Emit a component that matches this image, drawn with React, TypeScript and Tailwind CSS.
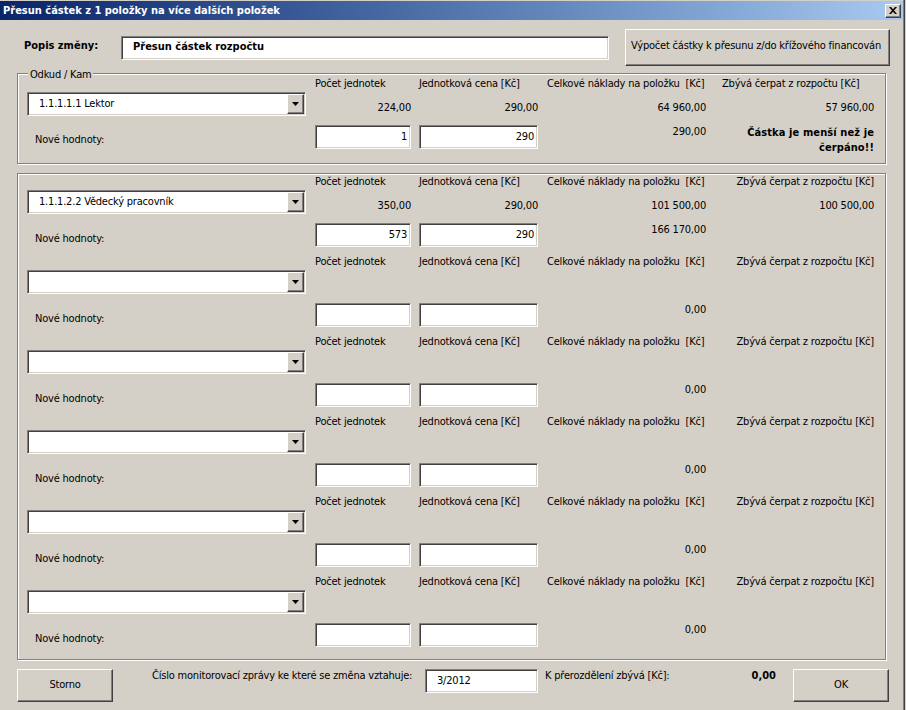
import React from 'react';

// classic Windows look
const FONT = "font-['DejaVu_Sans_Condensed','DejaVu_Sans',sans-serif] text-[11px] text-black tracking-[-0.2px]";
const SUNKEN =
  'bg-white border border-t-[#808080] border-l-[#808080] border-r-white border-b-white shadow-[inset_1px_1px_0_#404040,inset_-1px_-1px_0_#d4d0c8]';
const RAISED =
  'bg-[#d4d0c8] border border-t-white border-l-white border-r-[#404040] border-b-[#404040] shadow-[inset_-1px_-1px_0_#808080]';

type Row = {
  item?: string;
  count?: string;
  price?: string;
  total?: string;
  remaining?: string;
  newCount?: string;
  newPrice?: string;
  newTotal?: string;
  warning?: boolean;
};

function Combo({ value }: { value?: string }) {
  return (
    <div className={`${SUNKEN} w-[279px] h-[24px] flex items-center`}>
      <span className="flex-1 pl-[11px] whitespace-nowrap overflow-hidden leading-[14px]">{value}</span>
      <div className={`${RAISED} w-[17px] h-[20px] mr-[1px] flex items-center justify-center`}>
        <svg width="7" height="4" viewBox="0 0 7 4">
          <path d="M0 0h7L3.5 4z" fill="#000" />
        </svg>
      </div>
    </div>
  );
}

function Box({ value, className = '' }: { value?: string; className?: string }) {
  return (
    <div className={`${SUNKEN} h-[24px] flex items-center justify-end pr-[3px] leading-[14px] ${className}`}>
      {value}
    </div>
  );
}

function Group({ row, rightLabel, noveTop }: { row: Row; rightLabel?: boolean; noveTop: string }) {
  return (
    <div className="flex h-[72px] shrink-0">
      <div className="w-[288px] shrink-0 pt-[15px]">
        <Combo value={row.item} />
        <div className={`${noveTop} pl-[8px] leading-[14px]`}>Nové hodnoty:</div>
      </div>

      <div className="w-[104px] shrink-0">
        <div className="leading-[14px] whitespace-nowrap">Počet jednotek</div>
        <div className="mt-[10px] w-[96px] h-[14px] text-right leading-[14px]">{row.count}</div>
        <Box value={row.newCount} className="mt-[10px] w-[96px]" />
      </div>

      <div className="w-[128px] shrink-0">
        <div className="leading-[14px] whitespace-nowrap">Jednotková cena [Kč]</div>
        <div className="mt-[10px] w-[119px] h-[14px] text-right leading-[14px]">{row.price}</div>
        <Box value={row.newPrice} className="mt-[10px] w-[119px]" />
      </div>

      <div className="w-[175px] shrink-0">
        <div className="leading-[14px] whitespace-nowrap">Celkové náklady na položku&nbsp; [Kč]</div>
        <div className="mt-[10px] w-[159px] h-[14px] text-right leading-[14px]">{row.total}</div>
        <div className="mt-[10px] w-[159px] h-[14px] text-right leading-[14px]">{row.newTotal}</div>
      </div>

      <div className="w-[152px] shrink-0">
        <div className={`leading-[14px] whitespace-nowrap ${rightLabel ? 'text-right' : ''}`}>
          Zbývá čerpat z rozpočtu [Kč]
        </div>
        <div className="mt-[10px] h-[14px] text-right leading-[14px]">{row.remaining}</div>
        {row.warning && (
          <div className="mt-[10px] text-right font-bold tracking-[0.1px] leading-[15px] whitespace-nowrap">
            Částka je menší než je
            <br />
            čerpáno!!
          </div>
        )}
      </div>
    </div>
  );
}

function Frame({ children, legend, className }: { children: React.ReactNode; legend?: string; className: string }) {
  return (
    <div
      className={`relative ml-[17px] w-[869px] border border-[#808080] shadow-[inset_1px_1px_0_#fff,1px_1px_0_#fff] pl-[9px] ${className}`}
    >
      {legend && (
        <span className="absolute -top-[6px] left-[10px] px-[2px] bg-[#d4d0c8] leading-[14px]">{legend}</span>
      )}
      {children}
    </div>
  );
}

const source: Row = {
  item: '1.1.1.1.1 Lektor',
  count: '224,00',
  price: '290,00',
  total: '64 960,00',
  remaining: '57 960,00',
  newCount: '1',
  newPrice: '290',
  newTotal: '290,00',
  warning: true,
};

const targets: Row[] = [
  {
    item: '1.1.1.2.2 Vědecký pracovník',
    count: '350,00',
    price: '290,00',
    total: '101 500,00',
    remaining: '100 500,00',
    newCount: '573',
    newPrice: '290',
    newTotal: '166 170,00',
  },
  { newTotal: '0,00' },
  { newTotal: '0,00' },
  { newTotal: '0,00' },
  { newTotal: '0,00' },
  { newTotal: '0,00' },
];

export default function App() {
  return (
    <div className={`w-[906px] h-[710px] bg-[#d4d0c8] overflow-hidden ${FONT}`}>
      <div className="w-[903px] h-[710px] shadow-[1px_0_0_#808080,2px_0_0_#404040]">
        {/* Title bar */}
        <div className="pt-[1px]">
          <div className="h-[19px] flex items-center bg-gradient-to-r from-[#0a246a] to-[#a6caf0] pl-[3px] pr-[2px]">
            <span className="flex-1 font-bold tracking-normal text-white leading-[14px] pt-[1px]">
              Přesun částek z 1 položky na více dalších položek
            </span>
            <div className={`${RAISED} w-[16px] h-[14px] flex items-center justify-center`}>
              <svg width="8" height="7" viewBox="0 0 8 7">
                <path d="M0 0h2l2 2.3L6 0h2L5 3.5 8 7H6L4 4.7 2 7H0l3-3.5z" fill="#000" />
              </svg>
            </div>
          </div>
        </div>

        {/* Popis */}
        <div className="mt-[9px] h-[37px] flex items-center pl-[24px]">
          <div className="w-[97px] self-start mt-[10px] font-bold tracking-normal leading-[14px]">Popis změny:</div>
          <div className={`${SUNKEN} w-[488px] h-[24px] flex items-center pl-[11px] font-bold tracking-normal`}>
            Přesun částek rozpočtu
          </div>
          <button
            className={`${RAISED} ml-[16px] w-[265px] h-[37px] flex items-center pl-[5px] pb-[3px] whitespace-nowrap overflow-hidden`}
          >
            Výpočet částky k přesunu z/do křížového financován
          </button>
        </div>

        <Frame legend="Odkud / Kam" className="mt-[7px] h-[91px] pt-[3px]">
          <Group row={source} noveTop="mt-[17px]" />
        </Frame>

        <Frame className="mt-[9px] h-[487px] pt-[1px] flex flex-col gap-[8px]">
          {targets.map((r, i) => (
            <Group key={i} row={r} rightLabel noveTop="mt-[18px]" />
          ))}
        </Frame>

        {/* Bottom bar */}
        <div className="mt-[9px] flex items-start pl-[17px]">
          <button className={`${RAISED} w-[96px] h-[33px] flex items-center justify-center`}>Storno</button>
          <div className="ml-[39px] w-[273px] leading-[14px] whitespace-nowrap">
            Číslo monitorovací zprávy ke které se změna vztahuje:
          </div>
          <div className={`${SUNKEN} w-[113px] h-[24px] flex items-center pl-[11px]`}>3/2012</div>
          <div className="ml-[7px] w-[231px] flex justify-between leading-[14px]">
            <span>K přerozdělení zbývá [Kč]:</span>
            <span className="font-bold tracking-normal">0,00</span>
          </div>
          <button className={`${RAISED} ml-[17px] w-[96px] h-[33px] flex items-center justify-center`}>OK</button>
        </div>
      </div>
    </div>
  );
}
